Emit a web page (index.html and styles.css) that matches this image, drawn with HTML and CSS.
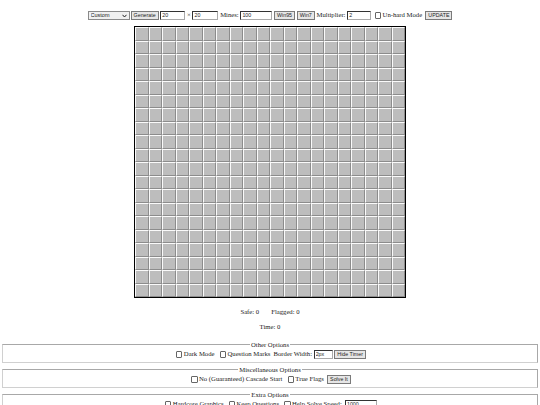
FILE: index.html
```html
<!DOCTYPE html>
<html>
<head>
<meta charset="utf-8">
<link rel="stylesheet" href="styles.css">
</head>
<body>
<div class="controls">
  <span class="select-wrap"><select class="sel"><option>Custom</option></select><svg class="chev" width="5" height="4" viewBox="0 0 5 4"><path d="M0.5 0.8 L2.5 3 L4.5 0.8" fill="none" stroke="#222" stroke-width="1"/></svg></span><button class="btn">Generate</button>
  <input class="inp w25" value="20"> × <input class="inp w26" value="20">
  Mines: <input class="inp w32" value="100">
  <button class="btn">Win95</button> <button class="btn">Win7</button>
  Multiplier: <input class="inp w24" value="2">
  <label class="chk"><span class="box"></span>Un-hard Mode</label>
  <button class="btn">UPDATE</button>
</div>
<div class="board" id="board"></div>
<div class="stats"><span>Safe: 0</span><span>Flagged: 0</span></div>
<div class="time">Time: 0</div>
<fieldset class="fs">
  <legend>Other Options</legend>
  <div class="row">
    <label class="chk"><span class="box"></span>Dark Mode</label>
    <label class="chk"><span class="box"></span>Question Marks</label>
    Border Width: <input class="inp w19" value="2px">
    <button class="btn">Hide Timer</button>
  </div>
</fieldset>
<fieldset class="fs">
  <legend>Miscellaneous Options</legend>
  <div class="row">
    <label class="chk"><span class="box"></span>No (Guaranteed) Cascade Start</label>
    <label class="chk"><span class="box"></span>True Flags</label>
    <button class="btn">Solve It</button>
  </div>
</fieldset>
<fieldset class="fs">
  <legend>Extra Options</legend>
  <div class="row">
    <label class="chk"><span class="box"></span>Hardcore Graphics</label>
    <label class="chk"><span class="box"></span>Keep Questions</label>
    <label class="chk"><span class="box"></span>Help Solve Speed:</label>
    <input class="inp w32" value="1000">
  </div>
</fieldset>
<script src="app.js"></script>
</body>
</html>
```
FILE: app.js
```js
var b = document.getElementById('board');
for (var i = 0; i < 400; i++) {
  var c = document.createElement('div');
  c.className = 'cell';
  b.appendChild(c);
}
```
FILE: styles.css
```css
html, body { margin: 0; padding: 0; background: #fff; }
body {
  font-family: "Liberation Serif", "Times New Roman", serif;
  font-size: 6.7px;
  color: #222;
  overflow: hidden;
}
.controls {
  text-align: center;
  white-space: nowrap;
  height: 10px;
  line-height: 10px;
  padding-top: 10px;
  margin-bottom: 6px;
}
.controls > * , .row > * { vertical-align: middle; }
.select-wrap { position: relative; display: inline-block; margin-right: 1px; }
.sel {
  appearance: none;
  -webkit-appearance: none;
  width: 42px;
  height: 9px;
  font: 5.5px "Liberation Sans", Arial, sans-serif;
  padding: 0 0 0 2px;
  border: 1px solid #8a8a8a;
  background: #f0f0f0;
  color: #222;
  border-radius: 0;
  display: block;
}
.chev { position: absolute; right: 3px; top: 3px; }
.btn {
  font: 5.3px "Liberation Sans", Arial, sans-serif;
  height: 8.5px;
  padding: 0 2px;
  margin: 0;
  border: 1px solid #7a7a7a;
  background: #e6e6e6;
  color: #222;
  line-height: 6px;
  border-radius: 0;
}
.inp {
  font: 5.3px "Liberation Sans", Arial, sans-serif;
  height: 9.5px;
  box-sizing: border-box;
  padding: 0 1px;
  margin: 0;
  border: 1px solid #333;
  border-right-color: #aaa;
  border-bottom-color: #aaa;
  background: #fff;
  color: #222;
}
.w19 { width: 19px; }
.w24 { width: 24px; }
.w25 { width: 25px; }
.w26 { width: 26px; }
.w32 { width: 32px; }
.chk { display: inline-flex; align-items: center; gap: 1.5px; margin: 0 1.5px 0 2px; }
.box {
  display: inline-block;
  width: 4.3px;
  height: 4.3px;
  border: 0.6px solid #666;
  border-radius: 1px;
  background: #fff;
}
.board {
  width: 270px;
  margin: 0 auto;
  border: 1px solid #000;
  display: grid;
  grid-template-columns: repeat(20, 13.5px);
  grid-auto-rows: 13.5px;
  background: #e8e8e8;
}
.cell {
  box-sizing: border-box;
  background: #bdbdbd;
  border: 1px solid;
  border-color: #fafafa #8c8c8c #8c8c8c #fafafa;
}
.stats {
  display: flex;
  justify-content: center;
  gap: 12px;
  margin-top: 9px;
  line-height: 9px;
}
.time {
  text-align: center;
  margin-top: 6px;
  line-height: 9px;
}
.fs {
  margin: 0 2px 3px 2px;
  padding: 1px 4px 3px;
  border: 1px solid #a8a8a8;
  border-left-color: #d0d0d0;
  border-bottom-color: #d0d0d0;
}
.fs:first-of-type { margin-top: 10px; }
.fs legend {
  margin: 0 auto;
  padding: 0 1px;
  line-height: 7px;
}
.row {
  text-align: center;
  white-space: nowrap;
  line-height: 10px;
  height: 10px;
}
```
